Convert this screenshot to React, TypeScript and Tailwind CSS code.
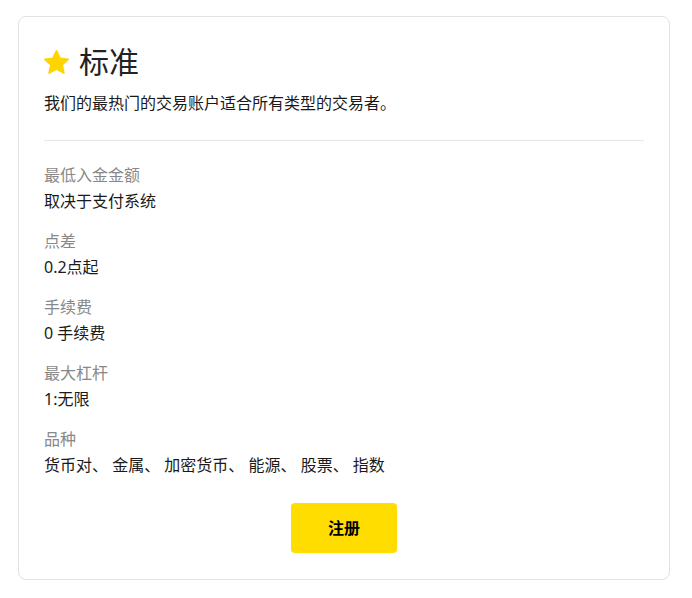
const rows = [
  { label: "最低入金金额", value: "取决于支付系统" },
  { label: "点差", value: "0.2点起" },
  { label: "手续费", value: "0 手续费" },
  { label: "最大杠杆", value: "1:无限" },
  { label: "品种", value: "货币对、 金属、 加密货币、 能源、 股票、 指数" },
];

function Star() {
  return (
    <svg width="25" height="24" viewBox="1 1 22 21" className="shrink-0">
      <path
        d="M12 1.8l3.1 6.6 7.1.8-5.3 4.9 1.5 7.1L12 17.6l-6.4 3.6 1.5-7.1-5.3-4.9 7.1-.8z"
        fill="#FFD400"
        stroke="#FFD400"
        strokeWidth="1.6"
        strokeLinejoin="round"
      />
    </svg>
  );
}

export default function App() {
  return (
    <div
      className="min-h-[598px] bg-white pt-4 pl-[18px] text-[#1a1a1a]"
      style={{ fontFamily: '"Noto Sans", "Noto Sans CJK SC", sans-serif' }}
    >
      <div className="w-[652px] rounded-lg border border-[#e2e2e2] px-[25px] pt-[25px] pb-[26px]">
        <div className="flex items-center gap-[10px] h-[40px]">
          <Star />
          <h1 className="text-[30px] leading-[40px] text-[#222]">标准</h1>
        </div>
        <p className="mt-[9px] text-[16px] leading-[24px]">我们的最热门的交易账户适合所有类型的交易者。</p>
        <div className="mt-[25px] mb-[21px] h-px bg-[#e6e6e6]" />
        <div className="flex flex-col gap-[14px]">
          {rows.map((r) => (
            <div key={r.label}>
              <div className="text-[16px] leading-[26px] text-[#888]">{r.label}</div>
              <div className="text-[16px] leading-[26px]">{r.value}</div>
            </div>
          ))}
        </div>
        <div className="mt-[25px] flex justify-center">
          <button className="h-[50px] w-[106px] rounded bg-[#FFDD00] text-[16px] font-bold text-black">
            注册
          </button>
        </div>
      </div>
    </div>
  );
}
